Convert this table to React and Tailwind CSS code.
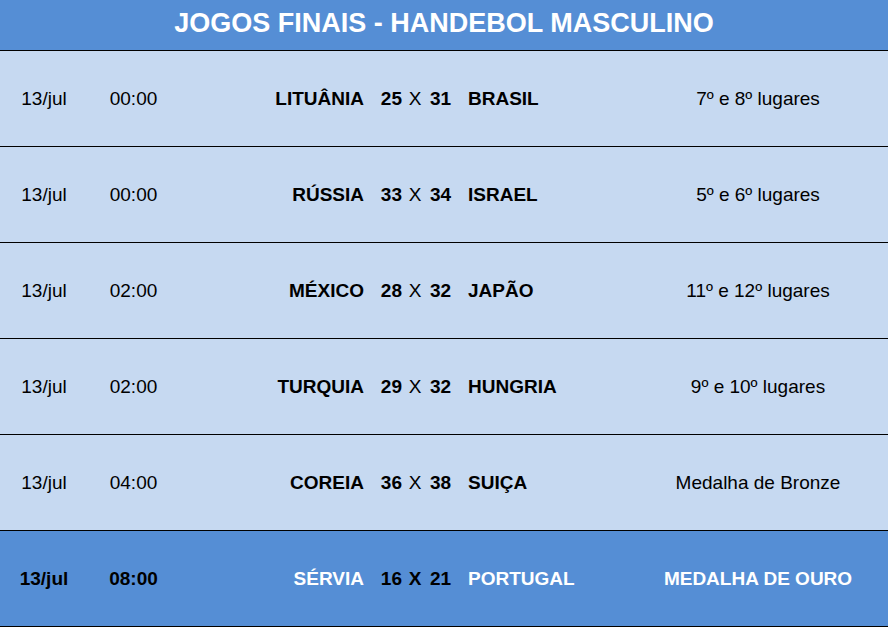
const games = [
  { date: "13/jul", time: "00:00", home: "LITUÂNIA", hs: 25, as: 31, away: "BRASIL", result: "7º e 8º lugares" },
  { date: "13/jul", time: "00:00", home: "RÚSSIA", hs: 33, as: 34, away: "ISRAEL", result: "5º e 6º lugares" },
  { date: "13/jul", time: "02:00", home: "MÉXICO", hs: 28, as: 32, away: "JAPÃO", result: "11º e 12º lugares" },
  { date: "13/jul", time: "02:00", home: "TURQUIA", hs: 29, as: 32, away: "HUNGRIA", result: "9º e 10º lugares" },
  { date: "13/jul", time: "04:00", home: "COREIA", hs: 36, as: 38, away: "SUIÇA", result: "Medalha de Bronze" },
];

const final = { date: "13/jul", time: "08:00", home: "SÉRVIA", hs: 16, as: 21, away: "PORTUGAL", result: "MEDALHA DE OURO" };

const cols = "grid grid-cols-[88px_91px_187px_36px_26px_40px_160px_260px] items-center h-[96px] pt-[2px] border-b border-black";

function Row({ g, gold }) {
  const name = gold ? "font-bold text-white" : "font-bold text-black";
  return (
    <div className={`${cols} ${gold ? "bg-[#558ed5]" : "bg-[#c6d9f1]"}`}>
      <span className={`text-center ${gold ? "font-bold" : ""}`}>{g.date}</span>
      <span className={`text-center ${gold ? "font-bold" : ""}`}>{g.time}</span>
      <span className={`text-right pr-[2px] ${name}`}>{g.home}</span>
      <span className="text-right font-bold">{g.hs}</span>
      <span className={`text-center ${gold ? "font-bold" : ""}`}>X</span>
      <span className="pl-[2px] font-bold">{g.as}</span>
      <span className={name}>{g.away}</span>
      <span className={`text-center ${gold ? "font-bold text-white" : ""}`}>{g.result}</span>
    </div>
  );
}

export default function App() {
  return (
    <div className="w-[889px] h-[627px] bg-white overflow-hidden font-['Liberation_Sans',Arial,sans-serif] text-[19px] text-black">
      <div className="w-[888px]">
        {/* Title bar */}
        <div className="h-[51px] bg-[#558ed5] border-b border-black flex items-center justify-center pb-[3px]">
          <h1 className="text-[27px] font-bold text-white">JOGOS FINAIS - HANDEBOL MASCULINO</h1>
        </div>

        {games.map((g, i) => (
          <Row key={i} g={g} />
        ))}
        <Row g={final} gold />
      </div>
    </div>
  );
}
